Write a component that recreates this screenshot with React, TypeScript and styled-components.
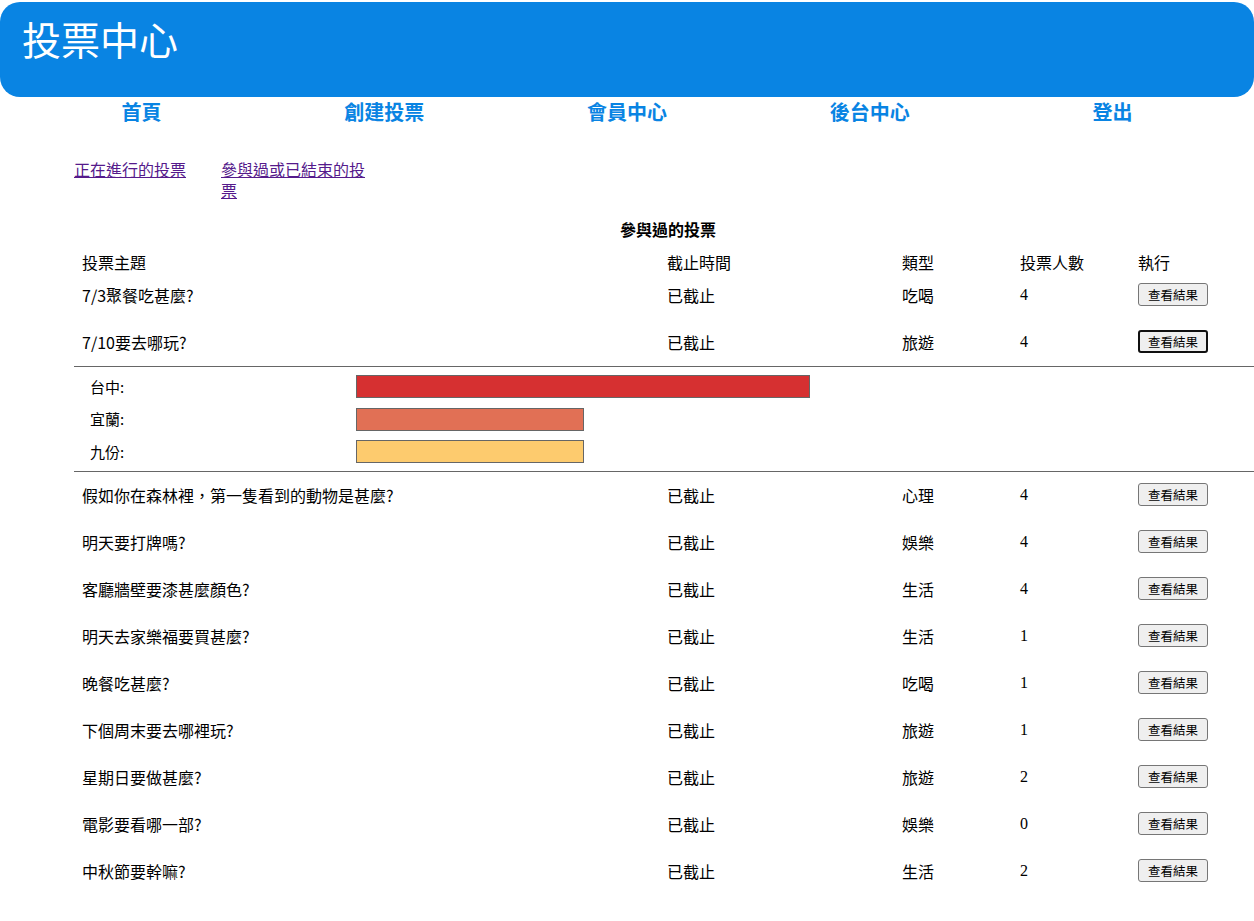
import { createGlobalStyle } from "styled-components";
import styled from "styled-components";

const GlobalStyle = createGlobalStyle`
  body {
    margin: 0;
    background: #fff;
    font-family: "Noto Sans CJK TC", "Noto Sans", sans-serif;
    color: #000;
  }
`;

const Page = styled.div`
  padding-top: 2px;
`;

const Header = styled.header`
  height: 95px;
  box-sizing: border-box;
  padding: 8px 22px 0;
  background-color: #0984e3;
  border-radius: 20px;
  h1 {
    margin: 0;
    font-size: 39px;
    font-weight: 400;
    line-height: 56px;
    color: #fff;
  }
`;

const Nav = styled.nav`
  display: grid;
  grid-template-columns: repeat(5, 1fr);
  padding: 0 20px;
  height: 25px;
  align-items: center;
  a {
    text-align: center;
    font-size: 20px;
    font-weight: 700;
    color: #0984e3;
    text-decoration: none;
  }
`;

const Tabs = styled.ul`
  display: grid;
  grid-template-columns: 147px 147px;
  margin: 37px 0 0 74px;
  padding: 0;
  list-style: none;
  li {
    line-height: 21px;
  }
  a {
    font-size: 16px;
    color: #551a8b;
    text-decoration: underline;
  }
`;

const Table = styled.section`
  margin: 17px 0 0 74px;
`;

const Caption = styled.h2`
  margin: 0 0 10px 8px;
  font-size: 16px;
  font-weight: 700;
  line-height: 22px;
  text-align: center;
`;

const Row = styled.div<{ head?: boolean }>`
  display: grid;
  grid-template-columns: 585px 235px 118px 118px 1fr;
  align-items: center;
  box-sizing: border-box;
  height: ${({ head }) => (head ? "22px" : "47px")};
  padding: 0 0 ${({ head }) => (head ? "0" : "2px")} 8px;
  font-size: 16px;
`;

const Num = styled.span`
  font-family: "Liberation Serif", serif;
  font-size: 16px;
`;

const ResultButton = styled.button<{ focused?: boolean }>`
  justify-self: start;
  width: 70px;
  height: 23px;
  padding: 0;
  font-family: "Noto Sans CJK TC", sans-serif;
  font-size: 12.5px;
  color: #000;
  background: #efefef;
  border: ${({ focused }) => (focused ? "2px solid #101010" : "1px solid #767676")};
  border-radius: 3px;
`;

const Results = styled.div`
  display: grid;
  grid-template-columns: 266px 1fr;
  row-gap: 9.5px;
  align-items: center;
  padding: 8px 0 8px 16px;
  border-top: 1px solid #666;
  border-bottom: 1px solid #666;
`;

const Label = styled.span`
  font-size: 15px;
  line-height: 20px;
`;

const Bar = styled.div<{ color: string }>`
  height: 23px;
  box-sizing: border-box;
  background-color: ${({ color }) => color};
  border: 1px solid #666;
`;

type Vote = { title: string; type: string; count: number };

const votes: Vote[] = [
  { title: "7/3聚餐吃甚麼?", type: "吃喝", count: 4 },
  { title: "7/10要去哪玩?", type: "旅遊", count: 4 },
  { title: "假如你在森林裡，第一隻看到的動物是甚麼?", type: "心理", count: 4 },
  { title: "明天要打牌嗎?", type: "娛樂", count: 4 },
  { title: "客廳牆壁要漆甚麼顏色?", type: "生活", count: 4 },
  { title: "明天去家樂福要買甚麼?", type: "生活", count: 1 },
  { title: "晚餐吃甚麼?", type: "吃喝", count: 1 },
  { title: "下個周末要去哪裡玩?", type: "旅遊", count: 1 },
  { title: "星期日要做甚麼?", type: "旅遊", count: 2 },
  { title: "電影要看哪一部?", type: "娛樂", count: 0 },
  { title: "中秋節要幹嘛?", type: "生活", count: 2 },
];

const options = [
  { name: "台中", count: 2, color: "#d63031" },
  { name: "宜蘭", count: 1, color: "#e17055" },
  { name: "九份", count: 1, color: "#fdcb6e" },
];

const OPEN = 1;

export default function App() {
  return (
    <Page>
      <GlobalStyle />
      <Header>
        <h1>投票中心</h1>
      </Header>
      <Nav>
        <a href="#">首頁</a>
        <a href="#">創建投票</a>
        <a href="#">會員中心</a>
        <a href="#">後台中心</a>
        <a href="#">登出</a>
      </Nav>
      <Tabs>
        <li>
          <a href="#">正在進行的投票</a>
        </li>
        <li>
          <a href="#">參與過或已結束的投票</a>
        </li>
      </Tabs>
      <Table>
        <Caption>參與過的投票</Caption>
        <Row head>
          <span>投票主題</span>
          <span>截止時間</span>
          <span>類型</span>
          <span>投票人數</span>
          <span>執行</span>
        </Row>
        {votes.map((v, i) => (
          <div key={v.title}>
            <Row>
              <span>{v.title}</span>
              <span>已截止</span>
              <span>{v.type}</span>
              <Num>{v.count}</Num>
              <ResultButton focused={i === OPEN}>查看結果</ResultButton>
            </Row>
            {i === OPEN && (
              <Results>
                {options.map((o) => [
                  <Label key={o.name + "-l"}>{o.name}:</Label>,
                  <Bar
                    key={o.name + "-b"}
                    color={o.color}
                    style={{ width: `${o.count * 226 + 2}px` }}
                  />,
                ])}
              </Results>
            )}
          </div>
        ))}
      </Table>
    </Page>
  );
}
